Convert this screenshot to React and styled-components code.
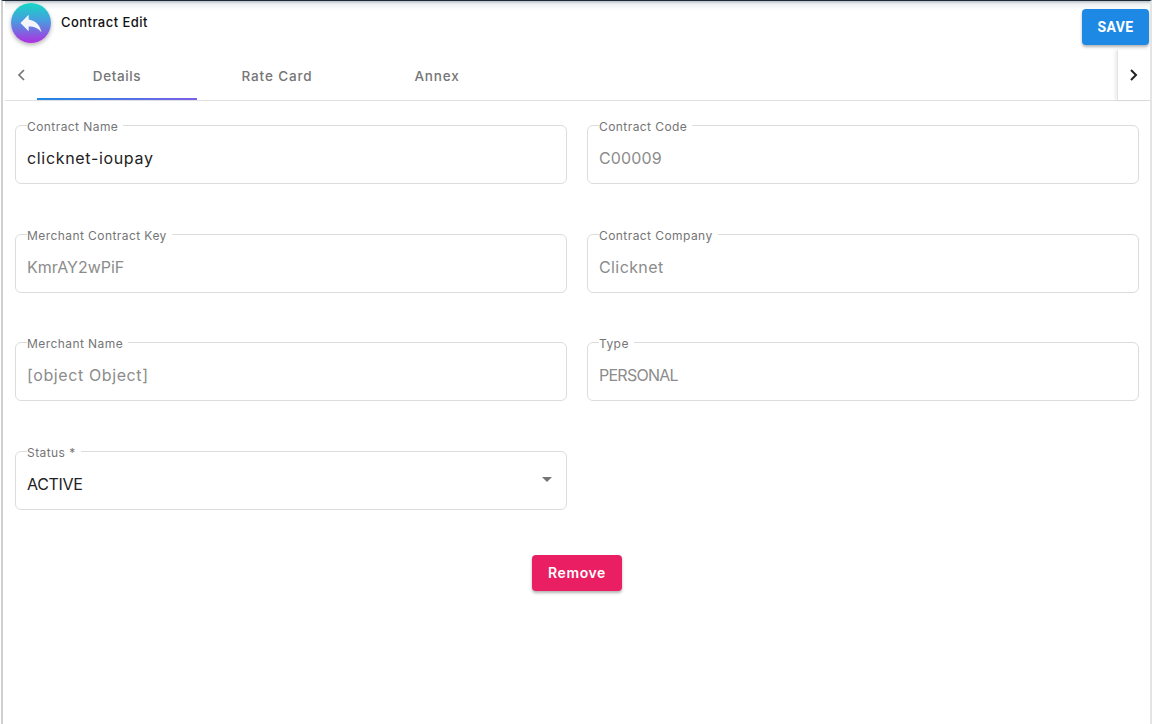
import React from 'react';
import styled, { createGlobalStyle } from 'styled-components';

const FONT = `Inter, "Noto Sans", "Liberation Sans", sans-serif`;

const Global = createGlobalStyle`
  html, body { margin: 0; padding: 0; background: #fff; }
  body { font-family: ${FONT}; }
  * { box-sizing: border-box; }
`;

const Page = styled.div`
  width: 1151px;
  height: 724px;
  margin-left: 1px;
  overflow: hidden;
  background: #fff;
  border-left: 2px solid #d0d0d0;
  border-right: 2px solid #e4e4e4;
  border-top: 1px solid #1c2b3a;
  padding-left: 2px;
`;

const Header = styled.header`
  display: flex;
  align-items: flex-start;
  justify-content: space-between;
  height: 49px;
  padding: 2px 1px 0 6px;
  background: linear-gradient(#b9c0c7 0, #eef0f2 3px, #fff 9px);
`;

const TitleGroup = styled.div`
  display: flex;
  align-items: flex-start;
  gap: 10px;
`;

const BackButton = styled.div`
  width: 40px;
  height: 40px;
  border-radius: 50%;
  display: flex;
  align-items: center;
  justify-content: center;
  background: linear-gradient(180deg, #14d8c4 0%, #4a9be0 45%, #b02fe0 100%);
  box-shadow: 0 2px 4px rgba(0, 0, 0, 0.3);
`;

const Title = styled.h1`
  margin: 11px 0 0;
  font-size: 13px;
  line-height: 16px;
  font-weight: 500;
  letter-spacing: 0.45px;
  color: #111;
`;

const SaveButton = styled.button`
  width: 67px;
  height: 36px;
  margin-top: 6px;
  border: 0;
  border-radius: 4px;
  background: #1e88e5;
  color: #fff;
  font-family: Roboto, "Liberation Sans", sans-serif;
  font-size: 14px;
  font-weight: 700;
  letter-spacing: 0.4px;
  box-shadow: 0 2px 3px rgba(0, 0, 0, 0.3);
`;

const TabBar = styled.nav`
  display: flex;
  align-items: stretch;
  height: 51px;
  border-bottom: 1px solid #e0e0e0;
`;

const Scroller = styled.div`
  width: ${p => p.$width}px;
  flex: none;
  display: flex;
  align-items: center;
  justify-content: center;
  color: ${p => p.$color};
  ${p => p.$edge && 'border-left: 1px solid #e4e4e4; box-shadow: -2px 0 3px rgba(0,0,0,0.08);'}
`;

const TabList = styled.div`
  flex: 1;
  display: flex;
`;

const Tab = styled.div`
  position: relative;
  width: 160px;
  display: flex;
  align-items: center;
  justify-content: center;
  font-size: 13.5px;
  font-weight: 500;
  letter-spacing: ${p => p.$track}px;
  color: #757575;
  padding-top: 1px;
  ${p => p.$active && `
    &::after {
      content: '';
      position: absolute;
      left: 0;
      right: 0;
      bottom: 0;
      height: 2px;
      background: linear-gradient(90deg, #1e88e5, #7b5fe8);
    }
  `}
`;

const Form = styled.main`
  display: grid;
  grid-template-columns: 552px 552px;
  column-gap: 20px;
  padding: 15px 0 0 10px;
`;

const Field = styled.fieldset`
  margin: 0 0 ${p => p.$gap}px;
  min-width: 0;
  height: 68px;
  padding: 0 11px;
  border: 1px solid #dcdcdc;
  border-radius: 6px;
  display: block;
`;

const Legend = styled.legend`
  padding: 4px 5px 0 0;
  font-size: 12px;
  line-height: 14px;
  letter-spacing: 0.43px;
  color: #757575;
`;

const FieldRow = styled.div`
  display: flex;
  align-items: center;
  justify-content: space-between;
  height: 48px;
  font-size: 16px;
  letter-spacing: ${p => p.$track || 0}px;
  color: ${p => (p.$muted ? '#8c8c8c' : '#222')};
`;

const Caret = styled.span`
  width: 0;
  height: 0;
  margin: 0 3px 10px 0;
  border-left: 5.5px solid transparent;
  border-right: 5.5px solid transparent;
  border-top: 5.5px solid #757575;
`;

const Actions = styled.div`
  display: flex;
  justify-content: center;
  margin-top: 4px;
  padding-right: 1px;
`;

const RemoveButton = styled.button`
  width: 90px;
  height: 36px;
  padding-bottom: 2px;
  border: 0;
  border-radius: 4px;
  background: #e91e63;
  color: #fff;
  font-family: ${FONT};
  font-size: 14px;
  font-weight: 600;
  letter-spacing: 0.6px;
  box-shadow: 0 2px 3px rgba(0, 0, 0, 0.3);
`;

const Chevron = ({ d, w = 2 }) => (
  <svg width="14" height="14" viewBox="0 0 14 14" fill="none" stroke="currentColor" strokeWidth={w}>
    <path d={d} />
  </svg>
);

const fields = [
  { label: 'Contract Name', value: 'clicknet-ioupay', gap: 41, track: 0.67 },
  { label: 'Contract Code', value: 'C00009', muted: true, gap: 41, track: 0.15 },
  { label: 'Merchant Contract Key', value: 'KmrAY2wPiF', muted: true, gap: 40 },
  { label: 'Contract Company', value: 'Clicknet', muted: true, gap: 40, track: 0.4 },
  { label: 'Merchant Name', value: '[object Object]', muted: true, gap: 41, track: 0.6 },
  { label: 'Type', value: 'PERSONAL', muted: true, gap: 41, track: -0.75 },
];

export default function App() {
  return (
    <Page>
      <Global />
      <Header>
        <TitleGroup>
          <BackButton>
            <svg width="28" height="28" viewBox="0 0 24 24" fill="#f2f6fc">
              <path d="M10 9V5l-7 7 7 7v-4.1c5 0 8.5 1.6 11 5.1-1-5-4-10-11-11z" />
            </svg>
          </BackButton>
          <Title>Contract Edit</Title>
        </TitleGroup>
        <SaveButton>SAVE</SaveButton>
      </Header>
      <TabBar>
        <Scroller $width={32} $color="#757575">
          <Chevron d="M10 2 5 7l5 5" w={1.7} />
        </Scroller>
        <TabList>
          <Tab $active $track={0.6}>Details</Tab>
          <Tab $track={0.85}>Rate Card</Tab>
          <Tab $track={0.8}>Annex</Tab>
        </TabList>
        <Scroller $width={33} $color="#222" $edge>
          <Chevron d="m4 2 5 5-5 5" w={2} />
        </Scroller>
      </TabBar>
      <Form>
        {fields.map(f => (
          <Field key={f.label} $gap={f.gap}>
            <Legend>{f.label}</Legend>
            <FieldRow $muted={f.muted} $track={f.track}>{f.value}</FieldRow>
          </Field>
        ))}
        <Field $gap={41}>
          <Legend>Status *</Legend>
          <FieldRow $track={-0.3}>
            ACTIVE
            <Caret />
          </FieldRow>
        </Field>
      </Form>
      <Actions>
        <RemoveButton>Remove</RemoveButton>
      </Actions>
    </Page>
  );
}
